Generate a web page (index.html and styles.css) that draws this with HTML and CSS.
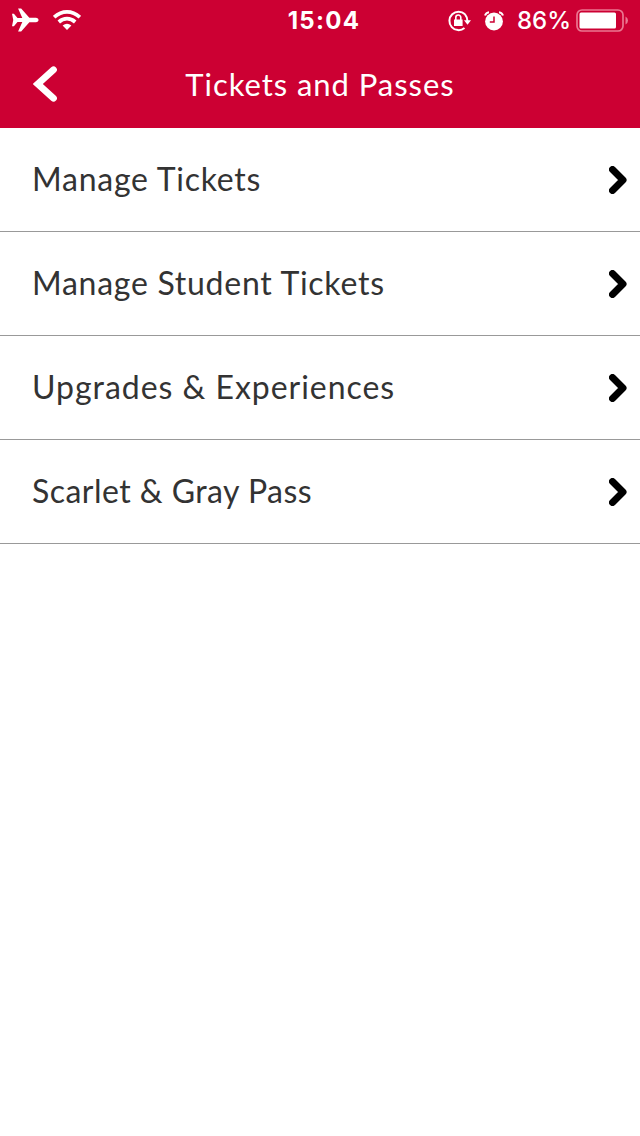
FILE: index.html
```html
<!DOCTYPE html>
<html lang="en">
<head>
<meta charset="utf-8">
<title>Tickets and Passes</title>
<link rel="stylesheet" href="styles.css">
</head>
<body>
<header class="header">
  <div class="status">
    <div class="status-left">
      <svg class="plane" width="27" height="24" viewBox="0 0 28 24"><path fill="#fff" d="M0 5.500h2l3.700 4.500h5L6.300 0h3.200l8.500 9.700H25q2.600.3 2.600 2.300T25 14.300h-7L9.500 24H6.300l4.400-10h-5L2 18.500H0L1.300 12z"/></svg>
      <svg class="wifi" width="28" height="20" viewBox="0 0 28 20"><g fill="none" stroke="#fff" stroke-width="3.700"><path d="M1.200 7.200Q7 1.900 14 1.900t12.800 5.300"/><path d="M5.800 12Q9.500 8.700 14 8.700t8.200 3.300"/></g><path fill="#fff" d="M9.600 15.600Q14 12 18.400 15.600L14 20z"/></svg>
    </div>
    <div class="clock">15:04</div>
    <div class="status-right">
      <svg class="lock" width="23" height="22" viewBox="0 0 23 22"><path fill="none" stroke="#fff" stroke-width="2" d="M17 4.300A9.200 9.200 0 1 0 16.500 18M17 4.300Q19.200 6.800 19.400 11"/><path fill="#fff" d="M16 10.200h7l-3.500 4.500zM6 9.500h8.600v6.500H6z"/><path fill="none" stroke="#fff" stroke-width="1.600" d="M7.800 10V7.500a2.500 2.500 0 0 1 5 0V10"/></svg>
      <svg class="alarm" width="20" height="20" viewBox="0 0 20 20"><circle cx="10" cy="10.500" r="8.900" fill="#fff"/><path d="M1 4.500Q2 1.500 5 1.200M15 1.200Q18 1.500 19 4.500" fill="none" stroke="#fff" stroke-width="2"/><path d="M10 5.500v5.600H5.800" fill="none" stroke="#c03" stroke-width="1.500"/></svg>
      <span class="percent">86%</span>
      <svg class="battery" width="52" height="23" viewBox="0 0 52 23"><rect x="1" y="1" width="46" height="21" rx="5" fill="none" stroke="#ea7791" stroke-width="1.700"/><rect x="3.500" y="3.500" width="36.500" height="16" rx="1.500" fill="#fff"/><path d="M49.500 7.500q2.500 1.300 2.500 4t-2.500 4z" fill="#ea7791"/></svg>
    </div>
  </div>
  <div class="navbar">
    <svg class="back" width="24" height="36" viewBox="0 0 24 36"><path d="M20.500 3.700L4.800 18l15.700 14.300" fill="none" stroke="#fff" stroke-width="6.700" stroke-linecap="round"/></svg>
    <h1 class="title">Tickets and Passes</h1>
  </div>
</header>
<main class="list">
  <div class="row"><span class="label manage">Manage Tickets</span><svg class="chevron" width="18" height="28" viewBox="0 0 18 28"><path d="M3.500 3.500L14 14 3.500 24.500"/></svg></div>
  <div class="row"><span class="label student">Manage Student Tickets</span><svg class="chevron" width="18" height="28" viewBox="0 0 18 28"><path d="M3.500 3.500L14 14 3.500 24.500"/></svg></div>
  <div class="row"><span class="label upgrades">Upgrades &amp; Experiences</span><svg class="chevron" width="18" height="28" viewBox="0 0 18 28"><path d="M3.500 3.500L14 14 3.500 24.500"/></svg></div>
  <div class="row"><span class="label pass">Scarlet &amp; Gray Pass</span><svg class="chevron" width="18" height="28" viewBox="0 0 18 28"><path d="M3.500 3.500L14 14 3.500 24.500"/></svg></div>
</main>
</body>
</html>
```
FILE: styles.css
```css
body { margin: 0; background: #fff; color: #333; font-family: Lato, sans-serif; }
svg { display: block; flex: none; }
.header { height: 128px; background: #c03; color: #fff; }
.status { height: 40px; display: grid; grid-template-columns: 240px 168px 232px; font-family: Inter, sans-serif; }
.status-left { display: flex; align-items: center; padding-left: 12px; }
.plane { margin-bottom: 2px; }
.wifi { margin-left: 14px; margin-bottom: 1px; }
.clock { font-size: 24px; line-height: 41px; font-weight: 700; letter-spacing: 1.3px; text-align: center; }
.status-right { display: flex; align-items: center; padding-left: 40px; }
.alarm { margin-left: 13px; }
.percent { margin-left: 13px; width: 54px; font-size: 24px; line-height: 41px; font-weight: 500; white-space: nowrap; }
.battery { margin-left: 5px; }
.navbar { height: 88px; display: grid; grid-template-columns: 80px 480px 80px; align-items: center; }
.back { margin-left: 33px; }
.title { margin: 0; font-size: 31px; line-height: 88px; height: 88px; font-weight: 400; text-align: center; letter-spacing: 0.95px; }
.row { box-sizing: border-box; height: 104px; padding: 0 13px 0 32px; border-bottom: 1px solid #999; display: flex; align-items: center; justify-content: space-between; }
.label { font-size: 32px; line-height: 40px; padding-bottom: 2px; white-space: nowrap; }
.manage { letter-spacing: 0.75px; }
.student { letter-spacing: 0.73px; }
.upgrades { letter-spacing: 0.97px; }
.pass { letter-spacing: 0.46px; }
.chevron { fill: none; stroke: #000; stroke-width: 7; stroke-linecap: round; stroke-linejoin: round; }
```
